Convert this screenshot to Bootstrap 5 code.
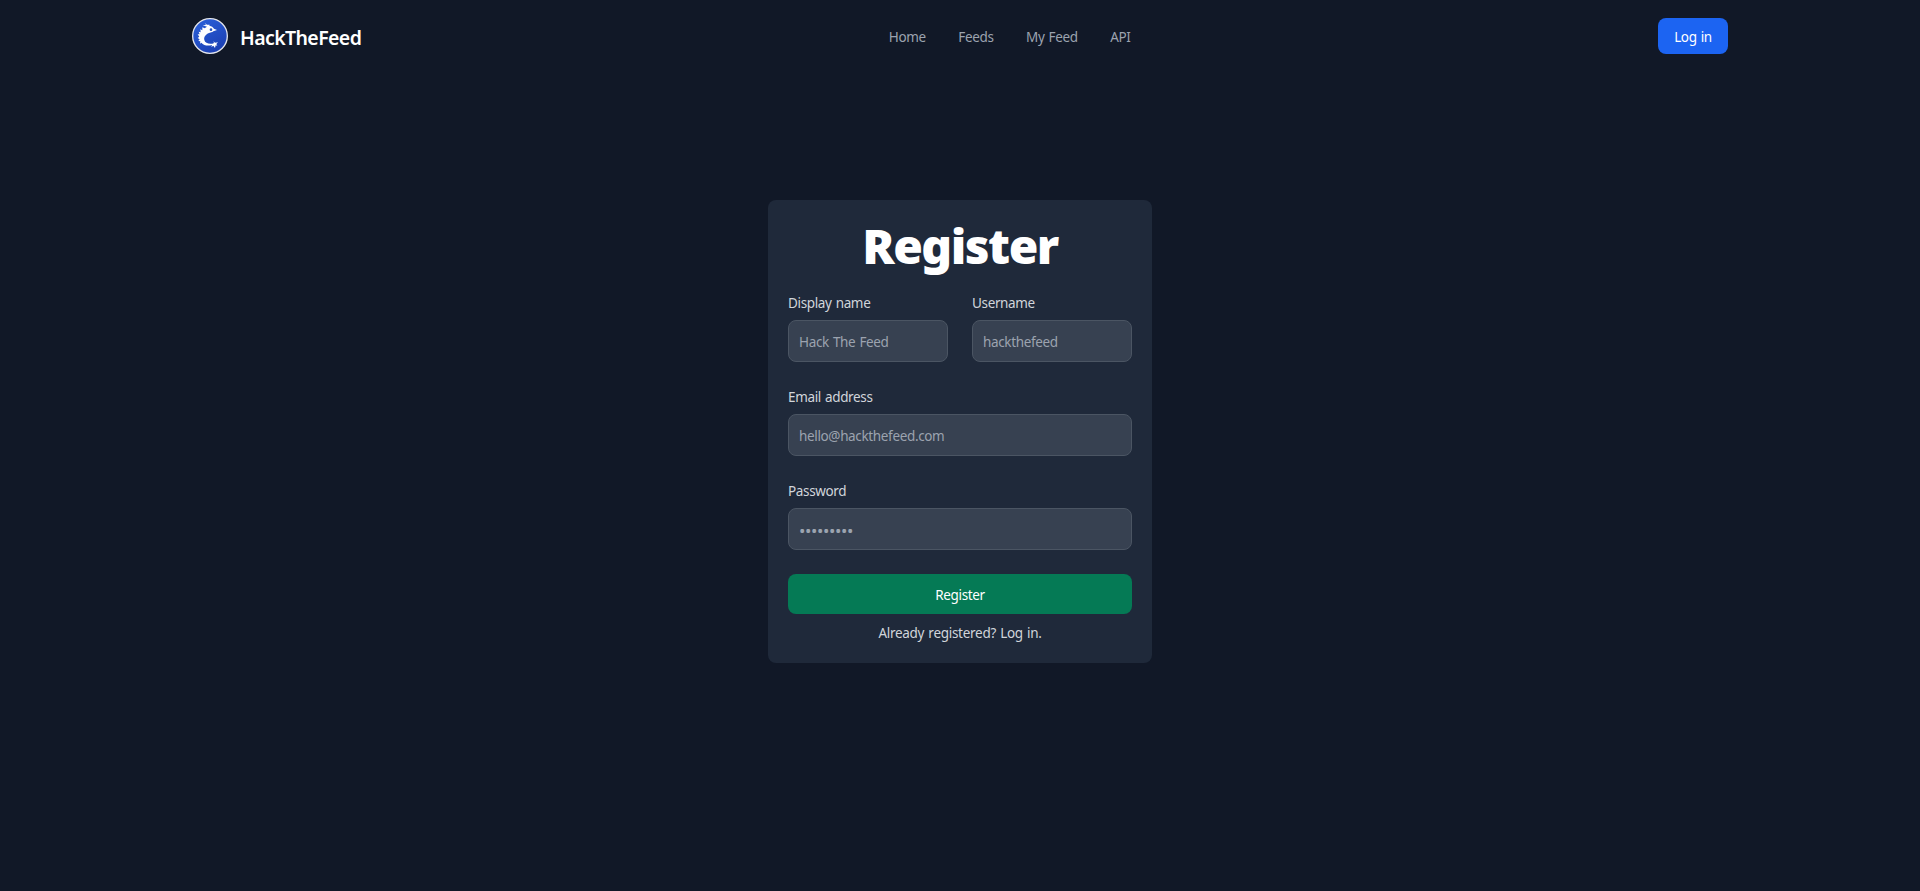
<!DOCTYPE html>
<html lang="en">
<head>
    <meta charset="UTF-8">
    <meta name="viewport" content="width=device-width, initial-scale=1.0">
    <title>Register - HackTheFeed</title>
    <link rel="stylesheet" href="https://cdn.jsdelivr.net/npm/bootstrap@5.3.0/dist/css/bootstrap.min.css">
    <style>
        body {
            background: #111827;
            color: #d1d5db;
            font-family: "Segoe UI", "Noto Sans", "Open Sans", sans-serif;
            font-size: 13.5px;
            line-height: 20px;
            letter-spacing: -0.35px;
            word-spacing: 0.9px;
        }

        .site-nav {
            height: 72px;
            padding: 0 192px;
        }

        .site-nav .navbar-brand {
            gap: 12px;
            font-size: 19.5px;
            font-weight: 600;
            line-height: 28px;
            letter-spacing: -0.6px;
        }

        .site-nav .navbar-brand span {
            padding-top: 3px;
        }

        .site-links {
            gap: 32.5px;
            padding-top: 2px;
        }

        .site-links .nav-link {
            color: #9ca3af;
        }

        .btn {
            --bs-btn-font-size: 13.5px;
            --bs-btn-line-height: 20px;
            --bs-btn-border-radius: 8px;
            --bs-btn-border-width: 0;
            --bs-btn-color: #fff;
            --bs-btn-hover-color: #fff;
            letter-spacing: -0.35px;
        }

        .btn-login {
            --bs-btn-bg: #1c64f2;
            --bs-btn-hover-bg: #1a56db;
            width: 70px;
            height: 36px;
            padding: 2px 0 0;
        }

        .btn-register {
            --bs-btn-bg: #057a55;
            --bs-btn-hover-bg: #046c4e;
            height: 40px;
            padding: 2px 0 0;
        }

        .register-card {
            width: 384px;
            margin-top: 128px;
            padding: 20px;
            background: #1f293a;
            border-radius: 8px;
        }

        .register-card h1 {
            margin-bottom: 22px;
            padding-top: 2px;
            font-size: 48px;
            font-weight: 900;
            line-height: 48px;
            letter-spacing: -1.5px;
        }

        .register-card label {
            display: block;
            margin-bottom: 6px;
            line-height: 22px;
        }

        .register-card .form-control {
            height: 42px;
            padding: 11px 10px 9px;
            font-size: 13.5px;
            line-height: 20px;
            letter-spacing: inherit;
            word-spacing: inherit;
            color: #fff;
            background: #374151;
            border-color: #4b5563;
            border-radius: 8px;
        }

        .register-card .form-control::placeholder {
            color: #9ca3af;
        }

        .register-card #password {
            font-size: 17px;
            letter-spacing: -0.4px;
        }

        .login-hint {
            margin: 9px 0 0;
            letter-spacing: -0.28px;
        }
    </style>
</head>
<body>
    <nav class="site-nav d-flex align-items-center justify-content-between">
        <a class="navbar-brand d-flex align-items-center text-white m-0 p-0" href="#">
            <svg width="36" height="36" viewBox="0 0 108 108" aria-hidden="true">
                <defs>
                    <linearGradient id="badge" x1="0" y1="0" x2="0.6" y2="1">
                        <stop offset="0" stop-color="#2b62dc"/>
                        <stop offset="1" stop-color="#1c40b4"/>
                    </linearGradient>
                </defs>
                <circle cx="54" cy="54" r="52" fill="url(#badge)" stroke="#e3e5ec" stroke-width="4"/>
                <path fill="#fff" d="M38 15L45 20L53 20L52 23C59 24 63 27 66 32L75 36L64 40C61 43 55 44 49 46C41 50 35 57 37 66C39 75 50 79 61 77L66 75L64 70L69 74L78 73L73 78L76 83L71 82L69 90L64 83L58 87L60 81C47 85 35 82 28 74L24 77L25 70L19 69L23 64L17 60L22 56L17 49L23 49L20 41L26 43L25 34L31 37L31 28L38 31L45 26L32 22L42 21Z"/>
                <circle cx="57" cy="35" r="4" fill="#2450bd"/>
            </svg>
            <span>HackTheFeed</span>
        </a>
        <div class="site-links d-flex">
            <a class="nav-link" href="#">Home</a>
            <a class="nav-link" href="#">Feeds</a>
            <a class="nav-link" href="#">My Feed</a>
            <a class="nav-link" href="#">API</a>
        </div>
        <a class="btn btn-login d-flex align-items-center justify-content-center" href="#">Log in</a>
    </nav>

    <main class="d-flex justify-content-center">
        <form class="register-card d-flex flex-column">
            <h1 class="text-white text-center">Register</h1>
            <div class="row mb-4">
                <div class="col-6">
                    <label for="displayName">Display name</label>
                    <input type="text" id="displayName" class="form-control" placeholder="Hack The Feed">
                </div>
                <div class="col-6">
                    <label for="username">Username</label>
                    <input type="text" id="username" class="form-control" placeholder="hackthefeed">
                </div>
            </div>
            <div class="mb-4">
                <label for="email">Email address</label>
                <input type="email" id="email" class="form-control" placeholder="hello@hackthefeed.com">
            </div>
            <div class="mb-4">
                <label for="password">Password</label>
                <input type="password" id="password" class="form-control" placeholder="•••••••••">
            </div>
            <button type="button" class="btn btn-register w-100">Register</button>
            <p class="login-hint text-center">Already registered? Log in.</p>
        </form>
    </main>

    <script src="https://cdn.jsdelivr.net/npm/bootstrap@5.3.0/dist/js/bootstrap.bundle.min.js"></script>
</body>
</html>
